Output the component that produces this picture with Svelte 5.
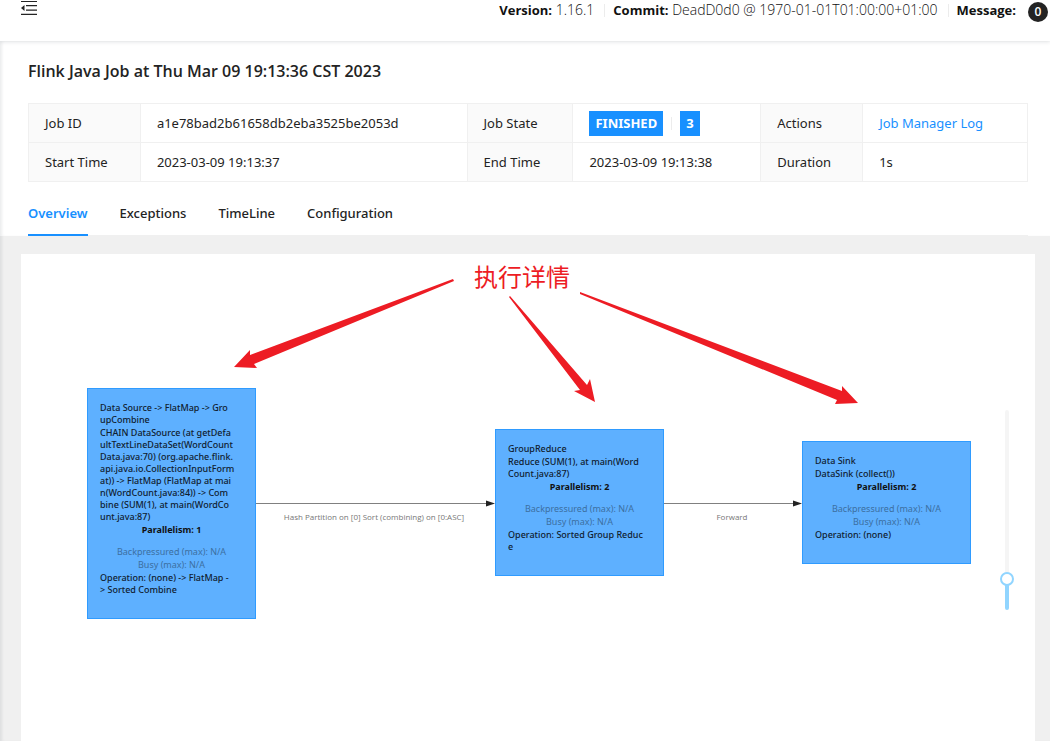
<script>
  const tabs = ["Overview", "Exceptions", "TimeLine", "Configuration"];
  let active = $state("Overview");
  let zoom = $state(13);

  const nodes = [
    {
      x: 66,
      y: 134,
      name: ["Data Source -> FlatMap -> Gro", "upCombine"],
      description: [
        "CHAIN DataSource (at getDefa",
        "ultTextLineDataSet(WordCount",
        "Data.java:70) (org.apache.flink.",
        "api.java.io.CollectionInputForm",
        "at)) -> FlatMap (FlatMap at mai",
        "n(WordCount.java:84)) -> Com",
        "bine (SUM(1), at main(WordCo",
        "unt.java:87)",
      ],
      parallelism: 1,
      operation: ["Operation: (none) -> FlatMap -", "> Sorted Combine"],
    },
    {
      x: 474,
      y: 175,
      name: ["GroupReduce"],
      description: ["Reduce (SUM(1), at main(Word", "Count.java:87)"],
      parallelism: 2,
      operation: ["Operation: Sorted Group Reduc", "e"],
    },
    {
      x: 781,
      y: 187,
      name: ["Data Sink"],
      description: ["DataSink (collect())"],
      parallelism: 2,
      operation: ["Operation: (none)"],
    },
  ];

  const edges = [
    { from: 234, to: 474, label: "Hash Partition on [0] Sort (combining) on [0:ASC]" },
    { from: 643, to: 781, label: "Forward" },
  ];

  const pointers = [
    "432,25 229,101 229,96 213,113 236,114 233,110 433,27",
    "489,42 566,131 569,125 574,148 553,137 559,136 488,43",
    "559,38 821,137 821,132 837,149 814,150 816,146 559,40",
  ];
</script>

{#snippet lines(rows)}
  {#each rows as row}
    <span>{row}</span>
  {/each}
{/snippet}

<div class="layout">
  <header>
    <button class="fold" aria-label="Collapse menu">
      <svg width="16" height="16" viewBox="0 0 16 16">
        <path d="M0 1h16v1H0zM5 5h11v1.3H5zM5 9.5h11v1.3H5zM0 13.7h16V15H0z" />
        <path d="M0 8 3.5 5v6z" />
      </svg>
    </button>
    <div class="meta">
      <span><strong>Version:</strong> 1.16.1</span>
      <i class="divider"></i>
      <span><strong>Commit:</strong> DeadD0d0 @ 1970-01-01T01:00:00+01:00</span>
      <i class="divider"></i>
      <span><strong>Message:</strong></span>
      <span class="badge">0</span>
    </div>
  </header>

  <section class="job">
    <h1>Flink Java Job at Thu Mar 09 19:13:36 CST 2023</h1>
    <table>
      <colgroup>
        <col class="c1" /><col class="c2" /><col class="c3" />
        <col class="c4" /><col class="c5" /><col />
      </colgroup>
      <tbody>
        <tr>
          <th scope="row">Job ID</th>
          <td>a1e78bad2b61658db2eba3525be2053d</td>
          <th scope="row">Job State</th>
          <td>
            <div class="state">
              <span class="tag">FINISHED</span>
              <i class="divider"></i>
              <span class="tag">3</span>
            </div>
          </td>
          <th scope="row">Actions</th>
          <td><a href="#log">Job Manager Log</a></td>
        </tr>
        <tr>
          <th scope="row">Start Time</th>
          <td>2023-03-09 19:13:37</td>
          <th scope="row">End Time</th>
          <td>2023-03-09 19:13:38</td>
          <th scope="row">Duration</th>
          <td>1s</td>
        </tr>
      </tbody>
    </table>
    <nav>
      {#each tabs as tab}
        <button class="tab" class:active={tab === active} onclick={() => (active = tab)}>
          {tab}
        </button>
      {/each}
    </nav>
  </section>

  <main>
    <div class="canvas">
      <svg class="edges" width="1014" height="400">
        {#each edges as { from, to, label }}
          <path class="line" d="M{from} 249.5H{to - 8}" />
          <path class="head" d="M{to} 249.5l-9 -3v6z" />
          <text x={(from + to) / 2 - 1} y="266">{label}</text>
        {/each}
      </svg>

      {#each nodes as node}
        <article class="node" style="left: {node.x}px; top: {node.y}px">
          <p>{@render lines(node.name)}</p>
          <p>{@render lines(node.description)}</p>
          <p class="parallelism">Parallelism: {node.parallelism}</p>
          <p class="metric">Backpressured (max): N/A</p>
          <p class="metric">Busy (max): N/A</p>
          <p>{@render lines(node.operation)}</p>
        </article>
      {/each}

      <svg class="pointers" width="1014" height="400">
        {#each pointers as points}
          <polygon {points} />
        {/each}
      </svg>
      <div class="note">执行详情</div>

      <input class="zoom" type="range" min="0" max="100" bind:value={zoom} aria-label="Zoom" />
    </div>
  </main>
</div>

<style>
  :global(body) {
    margin: 0;
    background: #f0f0f0;
  }

  .layout {
    display: flex;
    flex-direction: column;
    min-height: 100vh;
    font: 13px/22px "Noto Sans", "Open Sans", "Noto Sans CJK SC", sans-serif;
    color: #232323;
    box-shadow: inset 3px 0 3px -1px rgba(0, 21, 41, 0.08);
  }

  header {
    display: flex;
    justify-content: space-between;
    height: 41px;
    padding: 0 2px 0 21px;
    background: #fff;
    box-shadow: 0 1px 4px rgba(0, 21, 41, 0.12);
    z-index: 1;
  }

  button {
    padding: 0;
    border: 0;
    background: none;
    font: inherit;
    color: inherit;
    cursor: pointer;
  }

  .fold {
    height: 16px;
  }

  .fold svg {
    display: block;
    fill: #232323;
  }

  .meta {
    display: flex;
    align-items: flex-start;
    font-family: "Open Sans", sans-serif;
    font-size: 14px;
    font-weight: 300;
    line-height: 20px;
    color: #111;
  }

  .meta strong {
    font-size: 13px;
    font-weight: 700;
  }

  .divider {
    width: 1px;
    height: 13px;
    margin: 4px 8px 0 10px;
    background: #ececec;
  }

  .badge {
    width: 20px;
    height: 20px;
    margin: 2px 0 0 12px;
    border-radius: 10px;
    background: #232323;
    color: #fff;
    font-size: 12px;
    font-weight: 600;
    text-align: center;
  }

  .job {
    padding: 19px 22px 0 28px;
    background: #fff;
    box-shadow: inset 3px 0 3px -1px rgba(0, 21, 41, 0.08);
  }

  h1 {
    margin: 0 0 21px;
    font-family: "Open Sans", sans-serif;
    font-size: 16px;
    font-weight: 600;
    line-height: 22px;
  }

  table {
    width: 100%;
    table-layout: fixed;
    border-collapse: collapse;
  }

  .c1 { width: 11.2%; }
  .c2 { width: 32.7%; }
  .c3 { width: 10.6%; }
  .c4 { width: 18.8%; }
  .c5 { width: 10.2%; }

  th,
  td {
    height: 38px;
    padding: 0 16px;
    border: 1px solid #f0f0f0;
    font-weight: 400;
    text-align: left;
    white-space: nowrap;
  }

  th {
    background: #fafafa;
  }

  a {
    color: #1890ff;
    text-decoration: none;
  }

  .state {
    display: flex;
    align-items: center;
  }

  .state .divider {
    margin: 0 8px;
  }

  .tag {
    padding: 0 6px;
    background: #1890ff;
    color: #fff;
    font-weight: 700;
    line-height: 25px;
  }

  nav {
    display: flex;
    gap: 32px;
    height: 53px;
    border-bottom: 1px solid #f0f0f0;
  }

  .tab {
    height: 54px;
    padding-top: 9px;
    border-bottom: 2px solid transparent;
    font-weight: 500;
  }

  .tab.active {
    border-color: #1890ff;
    color: #1890ff;
    font-weight: 600;
  }

  main {
    display: flex;
    flex: 1;
    padding: 18px 15px 0 21px;
  }

  .canvas {
    position: relative;
    flex: 1;
    background: #fff;
  }

  .edges,
  .pointers {
    position: absolute;
    top: 0;
    left: 0;
  }

  .line {
    stroke: #808080;
  }

  .head {
    fill: #222;
  }

  text {
    fill: #777;
    font-family: "Open Sans", sans-serif;
    font-size: 8px;
    text-anchor: middle;
  }

  .node {
    position: absolute;
    box-sizing: border-box;
    width: 169px;
    padding: 13px 12px 21px;
    border: 1px solid #2f9bff;
    background: #5eb0ff;
    font-size: 9px;
    font-weight: 500;
    line-height: 12px;
    color: #10202f;
    white-space: nowrap;
  }

  .node p {
    margin: 0 0 1px;
  }

  .node span {
    display: block;
  }

  .node .parallelism {
    margin-bottom: 10px;
    color: #111;
    font-weight: 700;
    text-align: center;
  }

  .node .metric {
    color: #3c6f9f;
    font-weight: 400;
    text-align: center;
  }

  .pointers {
    fill: #ed1c24;
  }

  .note {
    position: absolute;
    top: 7px;
    left: 453px;
    color: #ed1c24;
    font-family: "Noto Sans CJK SC", sans-serif;
    font-size: 24px;
    line-height: 30px;
  }

  .zoom {
    position: absolute;
    top: 156px;
    right: 21px;
    width: 14px;
    height: 200px;
    margin: 0;
    appearance: none;
    background: none;
    writing-mode: vertical-lr;
    direction: rtl;
  }

  .zoom::-webkit-slider-runnable-track {
    width: 4px;
    height: 200px;
    border-radius: 2px;
    background: linear-gradient(#f5f5f5 85%, #91d5ff 85%);
  }

  .zoom::-webkit-slider-thumb {
    appearance: none;
    box-sizing: border-box;
    width: 14px;
    height: 14px;
    margin-left: -5px;
    border: 2px solid #91d5ff;
    border-radius: 50%;
    background: #fff;
  }
</style>
